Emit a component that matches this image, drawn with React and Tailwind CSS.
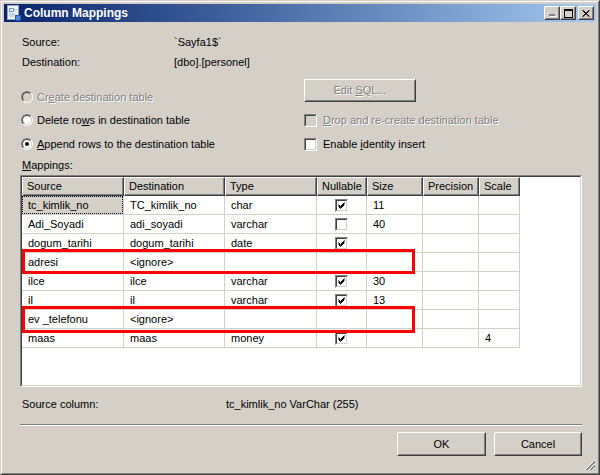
import React from 'react';

const rows = [
    { src: 'tc_kimlik_no', dst: 'TC_kimlik_no', type: 'char', nul: true, size: '11', selected: true },
    { src: 'Adi_Soyadi', dst: 'adi_soyadi', type: 'varchar', nul: false, size: '40' },
    { src: 'dogum_tarihi', dst: 'dogum_tarihi', type: 'date', nul: true, size: '' },
    { src: 'adresi', dst: '<ignore>', type: '', nul: null, size: '' },
    { src: 'ilce', dst: 'ilce', type: 'varchar', nul: true, size: '30' },
    { src: 'il', dst: 'il', type: 'varchar', nul: true, size: '13' },
    { src: 'ev _telefonu', dst: '<ignore>', type: '', nul: null, size: '' },
    { src: 'maas', dst: 'maas', type: 'money', nul: true, size: '', scale: '4' },
];

const cols = [
    { key: 'src', label: 'Source', w: 'w-[102px]' },
    { key: 'dst', label: 'Destination', w: 'w-[101px]' },
    { key: 'type', label: 'Type', w: 'w-[92px]' },
    { key: 'nul', label: 'Nullable', w: 'w-[50px]' },
    { key: 'size', label: 'Size', w: 'w-[56px]' },
    { key: 'prec', label: 'Precision', w: 'w-[56px]' },
    { key: 'scale', label: 'Scale', w: 'w-[41px]' },
];

const disabledText = 'text-[#808080] [text-shadow:1px_1px_0_#ffffff]';

function CheckBox({ checked, disabled }) {
    return (
        <div className="w-[13px] h-[13px] shrink-0 border border-t-[#808080] border-l-[#808080] border-b-white border-r-white">
            <div className={`w-full h-full border border-t-[#404040] border-l-[#404040] border-b-[#d4d0c8] border-r-[#d4d0c8] ${disabled ? 'bg-[#d4d0c8]' : 'bg-white'}`}>
                {checked && (
                    <svg width="9" height="9" viewBox="0 0 9 9" className="block">
                        <path d="M1.5 3.5 L3.5 5.5 L7.5 1.5 M1.5 4.5 L3.5 6.5 L7.5 2.5 M1.5 5.5 L3.5 7.5 L7.5 3.5" stroke="#000" strokeWidth="1" fill="none" />
                    </svg>
                )}
            </div>
        </div>
    );
}

function Radio({ checked, disabled }) {
    return (
        <div className="w-[12px] h-[12px] shrink-0 rounded-full border border-t-[#808080] border-l-[#808080] border-b-white border-r-white">
            <div className={`w-full h-full rounded-full border border-t-[#404040] border-l-[#404040] border-b-[#d4d0c8] border-r-[#d4d0c8] flex items-center justify-center ${disabled ? 'bg-[#d4d0c8]' : 'bg-white'}`}>
                {checked && <div className="w-[4px] h-[4px] rounded-full bg-black" />}
            </div>
        </div>
    );
}

function Button({ children, className = '' }) {
    return (
        <div className={`border border-t-white border-l-white border-b-[#404040] border-r-[#404040] bg-[#d4d0c8] ${className}`}>
            <div className="w-full h-full border border-t-[#d4d0c8] border-l-[#d4d0c8] border-b-[#808080] border-r-[#808080] flex items-center justify-center">
                {children}
            </div>
        </div>
    );
}

function TitleIcon() {
    return (
        <svg width="16" height="16" viewBox="0 0 16 16" className="shrink-0">
            <rect x="1.5" y="0.5" width="11" height="14" fill="#eef3fb" stroke="#8ea6c8" />
            <rect x="3.5" y="3.5" width="4" height="3" fill="none" stroke="#7f96b8" />
            <path d="M3 9h6M3 11h5M8 5h3" stroke="#9fb3d1" />
            <rect x="9.5" y="10.5" width="5" height="5" fill="#4a8ad8" stroke="#1f5aa8" />
        </svg>
    );
}

export default function App() {
    return (
        <div className="relative w-[600px] h-[475px] bg-[#d4d0c8] text-[11px] leading-[13px] text-black font-['Liberation_Sans',Arial,sans-serif] border border-t-[#d4d0c8] border-l-[#d4d0c8] border-b-[#404040] border-r-[#404040]">
            <div className="w-full h-full border border-t-white border-l-white border-b-[#808080] border-r-[#808080] p-[2px] flex flex-col">
                {/* title bar */}
                <div className="h-[18px] shrink-0 flex items-center bg-linear-to-r from-[#0a246a] to-[#a6caf0] pl-[2px] pr-[2px]">
                    <TitleIcon />
                    <span className="ml-[2px] text-white font-bold text-[12px]">Column Mappings</span>
                    <div className="ml-auto flex items-center">
                        <Button className="w-[16px] h-[14px]">
                            <svg width="8" height="8" viewBox="0 0 8 8">
                                <rect x="1" y="5" width="6" height="2" fill="#808080" />
                                <rect x="2" y="7" width="6" height="1" fill="#ffffff" />
                            </svg>
                        </Button>
                        <Button className="w-[16px] h-[14px]">
                            <svg width="9" height="9" viewBox="0 0 9 9">
                                <rect x="0.5" y="0.5" width="8" height="8" fill="none" stroke="#000" />
                                <rect x="0" y="1" width="9" height="1" fill="#000" />
                            </svg>
                        </Button>
                        <Button className="w-[16px] h-[14px] ml-[2px]">
                            <svg width="8" height="7" viewBox="0 0 8 7">
                                <path d="M0.5 0.5 L7 6.5 M1.5 0.5 L7.5 6.5 M7 0.5 L0.5 6.5 M7.5 0.5 L1 6.5" stroke="#000" strokeWidth="1" />
                            </svg>
                        </Button>
                    </div>
                </div>

                {/* body */}
                <div className="flex-1 flex flex-col pl-[16px] pr-[14px]">
                    <div className="mt-[14px] flex h-[13px]">
                        <span className="w-[154px] pl-[2px]">Source:</span>
                        <span>`Sayfa1$`</span>
                    </div>
                    <div className="mt-[7px] flex h-[13px]">
                        <span className="w-[154px] pl-[2px]">Destination:</span>
                        <span>[dbo].[personel]</span>
                    </div>

                    <div className="mt-[10px] flex">
                        <div className="w-[284px] flex flex-col">
                            <div className="mt-[10px] h-[16px] flex items-center gap-[4px] pl-[1px]">
                                <Radio disabled />
                                <span className={disabledText}>Cr<u>e</u>ate destination table</span>
                            </div>
                            <div className="mt-[7px] h-[16px] flex items-center gap-[4px] pl-[1px]">
                                <Radio />
                                <span>Delete ro<u>w</u>s in destination table</span>
                            </div>
                            <div className="mt-[8px] h-[16px] flex items-center gap-[4px] pl-[1px]">
                                <Radio checked />
                                <span><u>A</u>ppend rows to the destination table</span>
                            </div>
                            <div className="mt-[7px] h-[13px] pl-[2px]">
                                <u>M</u>appings:
                            </div>
                        </div>
                        <div className="flex flex-col">
                            <Button className="w-[112px] h-[23px]">
                                <span className={disabledText}>Edit <u>S</u>QL...</span>
                            </Button>
                            <div className="mt-[10px] h-[16px] flex items-center gap-[6px]">
                                <CheckBox disabled />
                                <span className={disabledText}><u>D</u>rop and re-create destination table</span>
                            </div>
                            <div className="mt-[8px] h-[16px] flex items-center gap-[6px]">
                                <CheckBox />
                                <span>Enable <u>i</u>dentity insert</span>
                            </div>
                        </div>
                    </div>

                    {/* mappings grid */}
                    <div className="relative mt-[3px] h-[212px] border border-t-[#808080] border-l-[#808080] border-b-white border-r-white">
                        <div className="w-full h-full border border-t-[#404040] border-l-[#404040] border-b-[#d4d0c8] border-r-[#d4d0c8] bg-white flex flex-col">
                            <div className="flex h-[19px] shrink-0">
                                {cols.map(c => (
                                    <div
                                        key={c.key}
                                        className={`${c.w} h-full bg-[#d4d0c8] border border-t-white border-l-white border-b-[#404040] border-r-[#404040] shadow-[inset_-1px_-1px_0_#808080] pl-[4px] flex items-center`}
                                    >
                                        {c.label}
                                    </div>
                                ))}
                            </div>
                            {rows.map((r, i) => (
                                <div key={i} className="flex h-[19px] shrink-0">
                                    <div className="w-[102px] h-full border-r border-b border-[#d4d0c8]">
                                        {r.selected ? (
                                            <div className="w-full h-full bg-[#d4d0c8] border border-dotted border-black pl-[5px] flex items-center">{r.src}</div>
                                        ) : (
                                            <div className="w-full h-full pl-[6px] flex items-center">{r.src}</div>
                                        )}
                                    </div>
                                    <div className="w-[101px] h-full border-r border-b border-[#d4d0c8] pl-[6px] flex items-center">{r.dst}</div>
                                    <div className="w-[92px] h-full border-r border-b border-[#d4d0c8] pl-[6px] flex items-center">{r.type}</div>
                                    <div className="w-[50px] h-full border-r border-b border-[#d4d0c8] flex items-center justify-center">
                                        {r.nul !== null && <CheckBox checked={r.nul} />}
                                    </div>
                                    <div className="w-[56px] h-full border-r border-b border-[#d4d0c8] pl-[6px] flex items-center">{r.size}</div>
                                    <div className="w-[56px] h-full border-r border-b border-[#d4d0c8]" />
                                    <div className="w-[41px] h-full border-r border-b border-[#d4d0c8] pl-[6px] flex items-center">{r.scale || ''}</div>
                                </div>
                            ))}
                        </div>
                        {/* highlight annotations */}
                        <div className="absolute left-[1px] top-[73px] w-[393px] h-[25px] border-[3px] border-[#ff0000]" />
                        <div className="absolute left-[1px] top-[130px] w-[393px] h-[27px] border-[3px] border-[#ff0000]" />
                    </div>

                    <div className="mt-[11px] flex h-[13px]">
                        <span className="w-[206px] pl-[2px]">Source column:</span>
                        <span>tc_kimlik_no VarChar (255)</span>
                    </div>

                    <div className="mt-[13px] h-[2px] border-t border-t-[#808080] border-b border-b-white" />

                    <div className="mt-[6px] flex justify-end gap-[8px]">
                        <Button className="w-[89px] h-[24px]">OK</Button>
                        <Button className="w-[88px] h-[24px]">Cancel</Button>
                    </div>
                </div>
            </div>

            {/* size grip */}
            <svg width="12" height="12" viewBox="0 0 12 12" className="absolute right-[3px] bottom-[3px]">
                <path d="M11 1 L1 11 M11 5 L5 11 M11 9 L9 11" stroke="#ffffff" />
                <path d="M11 2 L2 11 M11 3 L3 11 M11 6 L6 11 M11 7 L7 11 M11 10 L10 11" stroke="#808080" />
            </svg>
        </div>
    );
}
